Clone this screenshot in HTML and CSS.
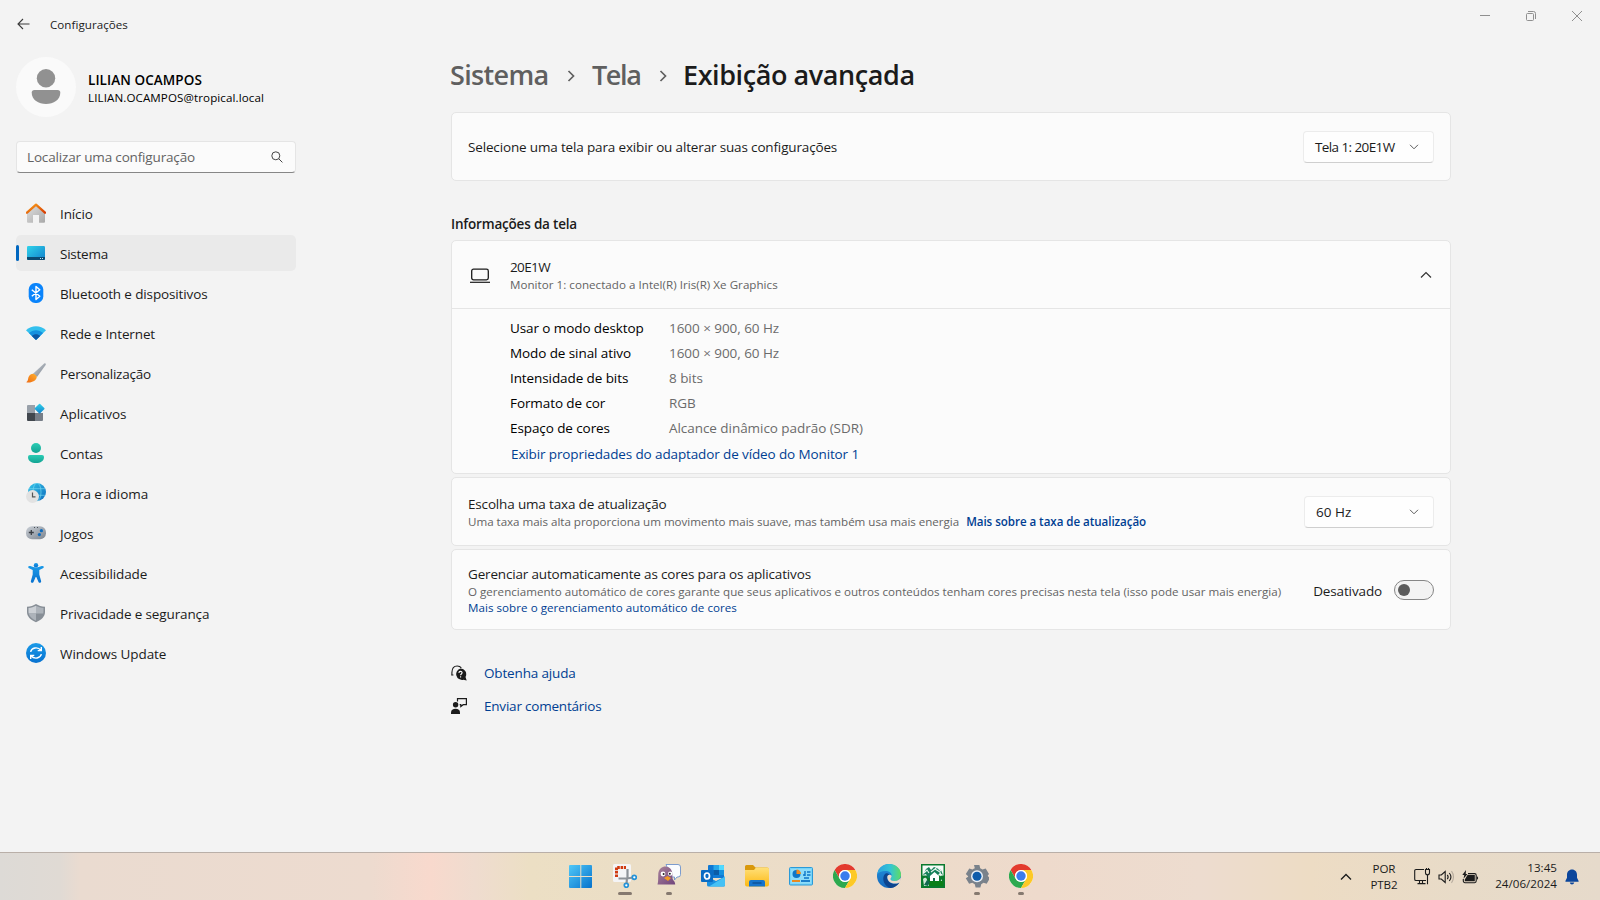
FILE: index.html
```html
<!DOCTYPE html>
<html lang="pt-BR">
<head>
<meta charset="utf-8">
<title>Configurações</title>
<link rel="stylesheet" href="styles.css">
</head>
<body>
<svg class="defs" width="0" height="0" aria-hidden="true">
  <defs>
    <linearGradient id="roof" x1="0" y1="0" x2="1" y2="1"><stop offset="0" stop-color="#f9a01b"/><stop offset="1" stop-color="#d83b01"/></linearGradient>
    <linearGradient id="wall" x1="0" y1="0" x2="1" y2="1"><stop offset="0" stop-color="#e0e0e0"/><stop offset="1" stop-color="#a8a8a8"/></linearGradient>
    <linearGradient id="screen" x1="0" y1="0" x2="1" y2="1"><stop offset="0" stop-color="#2fd3ea"/><stop offset="1" stop-color="#1280cc"/></linearGradient>
    <linearGradient id="teal" x1="0" y1="0" x2="0" y2="1"><stop offset="0" stop-color="#2accb4"/><stop offset="1" stop-color="#13a393"/></linearGradient>
    <linearGradient id="globe" x1="0" y1="0" x2="1" y2="1"><stop offset="0" stop-color="#34c6ea"/><stop offset="1" stop-color="#0f6cbd"/></linearGradient>
    <linearGradient id="steel" x1="0" y1="0" x2="1" y2="1"><stop offset="0" stop-color="#c9cfd6"/><stop offset="1" stop-color="#7c848e"/></linearGradient>
    <linearGradient id="azure" x1="0" y1="0" x2="0" y2="1"><stop offset="0" stop-color="#1a9ae8"/><stop offset="1" stop-color="#0872d0"/></linearGradient>
    <linearGradient id="brush" x1="1" y1="0" x2="0" y2="1"><stop offset="0" stop-color="#ffb02e"/><stop offset="1" stop-color="#ee6a12"/></linearGradient>
    <linearGradient id="win" x1="0" y1="0" x2="1" y2="1"><stop offset="0" stop-color="#50c8f8"/><stop offset="1" stop-color="#0672cc"/></linearGradient>
    <linearGradient id="folder" x1="0" y1="0" x2="0" y2="1"><stop offset="0" stop-color="#ffe07a"/><stop offset="1" stop-color="#fcb913"/></linearGradient>
    <linearGradient id="bird" x1="0" y1="0" x2="1" y2="1"><stop offset="0" stop-color="#a8829a"/><stop offset="1" stop-color="#71457c"/></linearGradient>
    <linearGradient id="edgeTop" x1="0" y1="0" x2="1" y2="0"><stop offset="0" stop-color="#2aa0e0"/><stop offset=".55" stop-color="#34c5d4"/><stop offset="1" stop-color="#5fdc62"/></linearGradient>
    <linearGradient id="edgeLow" x1="0" y1="0" x2="0" y2="1"><stop offset="0" stop-color="#2390dc"/><stop offset="1" stop-color="#1468bc"/></linearGradient>
    <symbol id="chrome" viewBox="0 0 24 24">
      <circle cx="12" cy="12" r="12" fill="#fff"/>
      <path d="M1.6 6A12 12 0 0 1 22.4 6H12a6 6 0 0 0-5.2 9z" fill="#e33b2e"/>
      <path d="M1.6 6A12 12 0 0 0 12 24l5.2-9A6 6 0 0 1 6.8 15z" fill="#2da94f"/>
      <path d="M22.4 6A12 12 0 0 1 12 24l5.2-9A6 6 0 0 0 12 6z" fill="#fdc926"/>
      <circle cx="12" cy="12" r="6" fill="#fff"/><circle cx="12" cy="12" r="4.7" fill="#3b7ded"/>
    </symbol>
  </defs>
</svg>

<div class="window">
  <header class="titlebar">
    <svg class="back" width="14" height="12" viewBox="0 0 14 12"><path d="M12.5 6H1M6 1 1 6l5 5" fill="none" stroke="#3a3a3a" stroke-width="1.1"/></svg>
    <span class="app-name">Configurações</span>
    <div class="controls">
      <svg width="12" height="12" viewBox="0 0 12 12"><path d="M1 5.5h10" stroke="#8f8f8f"/></svg>
      <svg width="12" height="12" viewBox="0 0 12 12" fill="none" stroke="#8f8f8f"><rect x="1.5" y="3.5" width="7" height="7" rx="1"/><path d="M3 1.5h5.5a2 2 0 0 1 2 2V9"/></svg>
      <svg width="12" height="12" viewBox="0 0 12 12"><path d="m1 1 10 10M11 1 1 11" stroke="#8f8f8f"/></svg>
    </div>
  </header>

  <div class="body">
    <aside class="sidebar">
      <div class="profile">
        <svg width="60" height="60" viewBox="0 0 60 60"><circle cx="30" cy="30" r="30" fill="#fafafa"/><circle cx="30" cy="21.3" r="9.2" fill="#919191"/><path d="M18.5 33h23a2.8 2.8 0 0 1 2.8 2.8C44.300 43 37.500 47 30 47s-14.300-4-14.300-11.200A2.800 2.800 0 0 1 18.500 33z" fill="#919191"/></svg>
        <div class="who">
          <strong>LILIAN OCAMPOS</strong>
          <span>LILIAN.OCAMPOS@tropical.local</span>
        </div>
      </div>

      <div class="search">
        <span>Localizar uma configuração</span>
        <svg width="12" height="12" viewBox="0 0 12 12" fill="none" stroke="#454545" stroke-width="1"><circle cx="4.800" cy="4.800" r="4"/><path d="m7.700 7.700 3.700 3.700"/></svg>
      </div>

      <nav class="nav">
        <a class="item">
          <svg viewBox="0 0 20 20"><path d="M1 9.500 10 1.800l9 7.700v9.300a1 1 0 0 1-1 1h-5V12H7v7.800H2a1 1 0 0 1-1-1z" fill="url(#wall)"/><path d="m1 9.700 9-8 9 8" fill="none" stroke="url(#roof)" stroke-width="2.300" stroke-linecap="round" stroke-linejoin="round"/></svg>
          <span>Início</span>
        </a>
        <a class="item active">
          <svg viewBox="0 0 20 20"><rect x="1" y="3" width="18" height="14" rx="1.200" fill="url(#screen)"/><path d="M1 14h18v1.800a1.200 1.200 0 0 1-1.200 1.200H2.200A1.200 1.200 0 0 1 1 15.800z" fill="#0b4a72"/><path d="M14 15.500h1M16 15.500h1" stroke="#bfe8f7"/></svg>
          <span class="t2">Sistema</span>
        </a>
        <a class="item">
          <svg viewBox="0 0 20 20"><rect x="2.700" y="0" width="14.600" height="20" rx="6.500" fill="#0a84fb"/><path d="m5.800 6.700 8 6.600-3.800 3.200V3.500l3.800 3.200-8 6.600" fill="none" stroke="#fff" stroke-width="1.400" stroke-linejoin="round"/></svg>
          <span>Bluetooth e dispositivos</span>
        </a>
        <a class="item">
          <svg viewBox="0 0 20 20"><path d="M0 7.200C5.500 1.800 14.500 1.800 20 7.200L10 17z" fill="#33c0ee"/><path d="M2.900 10.100c4-3.900 10.200-3.900 14.200 0L10 17z" fill="#1490df"/><path d="M5.800 13c2.400-2.200 6-2.200 8.400 0L10 17z" fill="#0c57a4"/></svg>
          <span>Rede e Internet</span>
        </a>
        <a class="item">
          <svg viewBox="0 0 20 20"><path d="M18.200.5c1.300-.5 2 .3 1.400 1.500L11 14l-4-3.200z" fill="url(#steel)"/><path d="M7.300 10.800c1.800.6 2.900 1.600 3.500 3.200-.6 3.800-5 6.200-10.600 5.300 2-1 1.600-2.700 2.200-4.700.6-2.200 2.600-3.700 4.900-3.800z" fill="url(#brush)"/></svg>
          <span class="t2">Personalização</span>
        </a>
        <a class="item">
          <svg viewBox="0 0 20 20"><path d="M1 3a1 1 0 0 1 1-1h7v8H1z" fill="#98a0a9"/><path d="M1 10h8v8H2a1 1 0 0 1-1-1z" fill="#41474e"/><path d="M9 10h8v7a1 1 0 0 1-1 1H9z" fill="#777e88"/><rect x="9.900" y="1.900" width="7.400" height="7.400" rx=".8" transform="rotate(45 13.600 5.600)" fill="url(#screen)"/></svg>
          <span class="t0">Aplicativos</span>
        </a>
        <a class="item">
          <svg viewBox="0 0 20 20" fill="url(#teal)"><circle cx="10" cy="5" r="5"/><path d="M4 12h12a2 2 0 0 1 2 2c0 4-3.600 6-8 6s-8-2-8-6a2 2 0 0 1 2-2z"/></svg>
          <span>Contas</span>
        </a>
        <a class="item">
          <svg viewBox="0 0 20 20"><circle cx="11" cy="9" r="9" fill="url(#globe)"/><g fill="none" stroke="#7fe0f4" stroke-width=".6"><ellipse cx="11" cy="9" rx="4" ry="9"/><path d="M3 5.700h16M3 12.300h16"/></g><circle cx="6.500" cy="13.500" r="6.500" fill="#e2e2e2"/><path d="M6.500 9.500v4.300h3" fill="none" stroke="#555" stroke-width="1.200"/></svg>
          <span class="t0">Hora e idioma</span>
        </a>
        <a class="item">
          <svg viewBox="0 0 20 20"><rect x="0" y="3.300" width="20" height="13" rx="6" fill="url(#steel)"/><path d="M2.800 9.500h5M5.300 7v5" stroke="#3a3f45" stroke-width="1.300"/><path d="M8 4.500h1M11 4.500h1" stroke="#4a4f55"/><circle cx="15.400" cy="7.700" r="1.600" fill="#0f6cbd"/><circle cx="13.400" cy="11.600" r="1.600" fill="#0f6cbd"/></svg>
          <span class="t0">Jogos</span>
        </a>
        <a class="item">
          <svg viewBox="0 0 20 20" fill="url(#azure)"><circle cx="10" cy="2.200" r="2.200"/><path d="M2.300 3.600c.5-.9 1.300-.8 2-.5C8.500 5 11.500 5 15.700 3.100c.7-.3 1.600-.4 2 .5.300.8-.1 1.400-.8 1.700L13.300 7v4.500l1.800 6.600c.2.800-.1 1.500-.9 1.700-.8.200-1.400-.2-1.700-.9L10.300 14h-.6l-2.200 4.900c-.3.700-.9 1.100-1.700.9-.8-.2-1.100-.9-.9-1.700l1.800-6.600V7L3.100 5.300c-.7-.3-1.100-.9-.8-1.700z"/></svg>
          <span>Acessibilidade</span>
        </a>
        <a class="item">
          <svg viewBox="0 0 20 20"><path d="M10 1c2.500 1.700 5.500 2.600 9 2.700V9c0 4.500-3.500 8-9 10.200C4.500 17 1 13.500 1 9V3.700C4.500 3.600 7.500 2.700 10 1z" fill="#878e96"/><path d="M10 2.800v7.700H2.700C2.400 8.500 2.500 7 2.500 5 5.300 4.800 7.800 4.100 10 2.800z" fill="#ccd0d5"/><path d="M10 2.800v7.700h7.300c.3-2 .2-3.500.2-5.500-2.800-.2-5.300-.9-7.500-2.200zM10 10.500H2.700c.9 3.200 3.300 5.300 7.300 7.200z" fill="#adb3ba"/></svg>
          <span>Privacidade e segurança</span>
        </a>
        <a class="item">
          <svg viewBox="0 0 20 20"><circle cx="10" cy="10" r="10" fill="url(#azure)"/><path d="M4.600 8.800c1-4 7-5.600 10.300-1.600M15.300 4v3.600h-3.600M15.400 11.200c-1 4-7 5.600-10.300 1.600M4.700 16v-3.600h3.600" fill="none" stroke="#fff" stroke-width="1.400"/></svg>
          <span class="t0">Windows Update</span>
        </a>
      </nav>
    </aside>

    <main class="main">
      <h1 class="crumbs">
        <span class="c1">Sistema</span>
        <svg width="8" height="12" viewBox="0 0 8 12"><path d="m1.500 1 5 5-5 5" fill="none" stroke="#5f5f5f" stroke-width="1.700"/></svg>
        <span class="c2">Tela</span>
        <svg width="8" height="12" viewBox="0 0 8 12"><path d="m1.500 1 5 5-5 5" fill="none" stroke="#5f5f5f" stroke-width="1.700"/></svg>
        <span class="current">Exibição avançada</span>
      </h1>

      <section class="card row select-display">
        <span class="label">Selecione uma tela para exibir ou alterar suas configurações</span>
        <div class="combo display"><span>Tela 1: 20E1W</span><svg width="10" height="6" viewBox="0 0 10 6"><path d="m1 .8 4 4 4-4" fill="none" stroke="#5c5c5c"/></svg></div>
      </section>

      <h2>Informações da tela</h2>

      <section class="card info">
        <div class="info-head">
          <svg class="laptop" width="20" height="16" viewBox="0 0 20 16" fill="none" stroke="#1b1b1b"><rect x="1.700" y="1.200" width="16.600" height="10.600" rx="1.800" stroke-width="1.300"/><path d="M0 14.300h20" stroke-width="1.200"/></svg>
          <div class="names"><span class="model">20E1W</span><span class="sub">Monitor 1: conectado a Intel(R) Iris(R) Xe Graphics</span></div>
          <svg class="fold" width="12" height="8" viewBox="0 0 12 8"><path d="m1 6.500 5-5 5 5" fill="none" stroke="#333" stroke-width="1.200"/></svg>
        </div>
        <div class="details">
          <dl>
            <dt>Usar o modo desktop</dt><dd>1600 × 900, 60 Hz</dd>
            <dt>Modo de sinal ativo</dt><dd>1600 × 900, 60 Hz</dd>
            <dt>Intensidade de bits</dt><dd>8 bits</dd>
            <dt>Formato de cor</dt><dd>RGB</dd>
            <dt>Espaço de cores</dt><dd>Alcance dinâmico padrão (SDR)</dd>
          </dl>
          <a class="link adapter">Exibir propriedades do adaptador de vídeo do Monitor 1</a>
        </div>
      </section>

      <section class="card row refresh">
        <div class="stack">
          <span class="label">Escolha uma taxa de atualização</span>
          <span class="sub"><span class="desc">Uma taxa mais alta proporciona um movimento mais suave, mas também usa mais energia</span><a class="link bold">Mais sobre a taxa de atualização</a></span>
        </div>
        <div class="combo rate"><span>60 Hz</span><svg width="10" height="6" viewBox="0 0 10 6"><path d="m1 .8 4 4 4-4" fill="none" stroke="#5c5c5c"/></svg></div>
      </section>

      <section class="card row colors">
        <div class="stack">
          <span class="label">Gerenciar automaticamente as cores para os aplicativos</span>
          <span class="sub wide">O gerenciamento automático de cores garante que seus aplicativos e outros conteúdos tenham cores precisas nesta tela (isso pode usar mais energia)</span>
          <a class="link medium">Mais sobre o gerenciamento automático de cores</a>
        </div>
        <span class="state">Desativado</span>
        <div class="toggle"><i></i></div>
      </section>

      <div class="help">
        <a><svg width="16" height="16" viewBox="0 0 16 16"><path d="M.9 10V7.500C1 3.500 3 1 6.200 1c1.900 0 3.200.7 4.100 1.900M.2 10h2.200" fill="none" stroke="#1b1b1b" stroke-width="1.100"/><path d="M9.500 3.500a5.700 5.700 0 0 1 5 8.500l1.200 3.600-3.300-.9A5.700 5.700 0 1 1 9.500 3.500z" fill="#1b1b1b"/><path d="M7.900 8c0-2.200 3.200-2.100 3.200-.2 0 1.200-1.500 1.200-1.500 2.400M9.600 11.200v1.200" fill="none" stroke="#fff" stroke-width="1.100"/></svg><span>Obtenha ajuda</span></a>
        <a><svg width="16" height="16" viewBox="0 0 16 16"><circle cx="4.600" cy="6.800" r="2.700" fill="#1b1b1b"/><path d="M0 16v-1.600C0 12 2 10.700 4.600 10.700S9 12 9 14.400V16z" fill="#1b1b1b"/><path d="M6.500 3.500V.6h8.900v6.100h-3.200L9.800 8.500V6.700H8.700" fill="none" stroke="#1b1b1b" stroke-width="1.200"/></svg><span class="send">Enviar comentários</span></a>
      </div>
    </main>
  </div>
</div>

<footer class="taskbar">
  <div class="apps">
    <div class="app"><svg viewBox="0 0 24 24" fill="url(#win)"><path d="M1 1H11.300V12H0V2a1 1 0 0 1 1-1zM12.300 1H22a1 1 0 0 1 1 1V12H12.300zM0 13H11.300V24H1a1 1 0 0 1-1-1zM12.300 13H23V23a1 1 0 0 1-1 1H12.300z"/></svg></div>
    <div class="app focused"><svg viewBox="0 0 24 24"><rect x="0" y="0" width="18" height="18" rx="1.500" fill="#f4f4f6"/><path d="M3.500 13V3.500H13" fill="none" stroke="#d03a10" stroke-width="3" stroke-dasharray="2.600 .8"/><path d="M14.500 5v8.500M5.500 14.500H14L20 13.500M14 14l-.5 6" fill="none" stroke="#8d9298" stroke-width="2.200"/><circle cx="21.300" cy="13.300" r="2" fill="#fff" stroke="#2492d8" stroke-width="1.700"/><circle cx="13.300" cy="21.300" r="2" fill="#fff" stroke="#2492d8" stroke-width="1.700"/></svg></div>
    <div class="app open"><svg viewBox="0 0 24 24"><path d="M9 .5h12a2.500 2.500 0 0 1 2.500 2.500v7.500a2.500 2.500 0 0 1-2.500 2.500h-1l-2.500 3V13H14z" fill="#fafcff" stroke="#6e93cc" stroke-width=".9"/><path d="M.5 20.500C1.500 17 1 14 1.300 9.500 1.800 5 5 2.500 8.500 2.500c4 0 6.500 3 6.800 7 .2 3.500-.3 5.500 1.700 7.500.8 1 1.200 2.500 1.200 3.500z" fill="url(#bird)"/><circle cx="6" cy="10" r="2.400" fill="#fff"/><circle cx="13.200" cy="9.600" r="2.200" fill="#fff"/><circle cx="6.600" cy="10" r="1" fill="#222"/><circle cx="12.800" cy="9.700" r="1" fill="#222"/><path d="m7 14 3.500-2 3.500 2-3 3z" fill="#f29a22"/></svg></div>
    <div class="app"><svg viewBox="0 0 24 24"><path d="M7 2a1 1 0 0 1 1-1h14a1 1 0 0 1 1 1v12H7z" fill="#0f78d4"/><path d="M12.500 1H18v5h-5.500z" fill="#28a8ea"/><path d="M18 1h4a1 1 0 0 1 1 1v4h-5z" fill="#50d9ff"/><path d="M12.500 6H18v5h-5.500z" fill="#0a5ca8"/><path d="M18 6h5v5h-5z" fill="#1490df"/><path d="M6 12.500 15 17l9-4.500V21a1.500 1.500 0 0 1-1.500 1.500h-15A1.500 1.500 0 0 1 6 21z" fill="#1a8fe0"/><path d="M24 12.500V21a1.500 1.500 0 0 1-1.500 1.500H8z" fill="#45c1f5"/><rect x="0" y="6" width="12" height="12" rx="1" fill="#0a6cc4"/><ellipse cx="6" cy="12" rx="2.500" ry="3" fill="none" stroke="#fff" stroke-width="1.700"/></svg></div>
    <div class="app"><svg viewBox="0 0 24 24"><path d="M0 2.500A1.500 1.500 0 0 1 1.500 1H8l2.500 2.500H22a2 2 0 0 1 2 2V14H0z" fill="#d9980b"/><path d="M0 6h9l2-2.500h11.500A1.500 1.500 0 0 1 24 5v15.500a2 2 0 0 1-2 2H2a2 2 0 0 1-2-2z" fill="url(#folder)"/><path d="M4 22.500V18a2 2 0 0 1 2-2h12a2 2 0 0 1 2 2v4.500z" fill="#1574cc"/><path d="M7.500 19h9" stroke="#0b4f96" stroke-width="1.400"/></svg></div>
    <div class="app"><svg viewBox="0 0 24 24"><rect x=".5" y="3.500" width="23" height="17.500" rx="1" fill="#76d4f8" stroke="#2b9ad8"/><path d="M2 5h20v14.500H2z" fill="#8edcf9"/><circle cx="7.500" cy="10" r="4" fill="#0f76c8"/><path d="M7.500 10V5.500a4.500 4.500 0 0 1 4.500 4.500z" fill="#f28c1e"/><path d="M14 11h2M18 8h3.500M18 11h3.500M15 14h5M16 7v5" stroke="#0f76c8" stroke-width="1.400"/><path d="M3 17h8" stroke="#e88a20" stroke-width="2"/><path d="M12 17h9" stroke="#1b7fcb" stroke-width="2"/></svg></div>
    <div class="app"><svg><use href="#chrome"/></svg></div>
    <div class="app"><svg viewBox="0 0 24 24"><circle cx="12" cy="12" r="12" fill="url(#edgeLow)"/><path d="M.2 10.500C1 4.500 5.800 0 12 0c7 0 12 5 12 10.500 0 4-2.800 6.500-6.300 6.500-2.800 0-4.200-1-4.200-2 0-.8 1.200-1.200 1.200-3.200C14.700 9 12 7 8.500 7 4.500 7 1.500 8.500.2 10.500z" fill="url(#edgeTop)"/><path d="M8.600 9.500c-4 3-3 11.500 4.400 14.400 4 .3 7.500-2 9.300-5.300-5 3-12 .5-12-5.100 0-1.500.8-2.500 2-3-1.200-1.300-2.500-1.600-3.700-1z" fill="#0c448e"/><path d="M10.300 13c-.2 5 6 8.500 12.200 5.400l1.300-1.900V13.500c-1.200 2.300-3.500 3.500-6.100 3.500-2.800 0-4.200-1-4.200-2 0-.8 1.200-1.200 1.200-3.200-1.600-2-4.200-1.300-4.400 1.200z" fill="#eddccb"/></svg></div>
    <div class="app"><svg viewBox="0 0 24 24"><path d="M0 0h24v24H0z" fill="#0a7a2e"/><path d="M1.500 1.500h21v10h-21z" fill="#f7fbf8"/><path d="m2 11 3-6 3-2 2 3 3-3 3 1 4 2 2 5-3-2-2 2v3h-3v-3h-4v3H7l-2-4z" fill="#16805a"/><path d="m3 9 3-3 2 3M10 8l4-3 5 3 1 4M14 5l2-2 4 4" fill="none" stroke="#e8f5ee" stroke-width="1.100"/><path d="m9 12 4.500-4 4.500 4v5H9z" fill="#fff"/><path d="M2 15c3-3 5 0 4 5l5-3 2 3 6-2 2-3v5l-8 2H3z" fill="#cfe9d8"/><path d="M8 17h14v5H8z" fill="#0a7f18"/><path d="m3 21 3-5 3 2-2 4zM12 17v-3h2v3z" fill="#12694f"/></svg></div>
    <div class="app open"><svg viewBox="0 0 24 24"><path d="m9 1 .8 3.200a8 8 0 0 0-2.300 1.300L4.300 4.600.8 10.100l2.300 2.100v.6L.8 14.200l3.300 5.500 3.200-.9 2.500 1.500.8 3.100h4.800l.8-3.100 2.300-1.500 3.200.9 3.300-5.500-2.200-2.100v-.6L24 10.100 20.700 4.600l-3.200.9-2.300-1.300L14.400 1z" fill="#7a828b"/><circle cx="12" cy="12.200" r="6" fill="#e8eef5"/><circle cx="12" cy="12.200" r="4.500" fill="#0e5cab"/></svg></div>
    <div class="app open"><svg><use href="#chrome"/></svg></div>
  </div>

  <div class="tray">
    <svg class="more" width="12" height="8" viewBox="0 0 12 8"><path d="m1 6.500 5-5 5 5" fill="none" stroke="#1b1b1b" stroke-width="1.300"/></svg>
    <div class="lang"><span>POR</span><span>PTB2</span></div>
    <svg class="net" width="17" height="17" viewBox="0 0 17 17" fill="none" stroke="#1b1b1b" stroke-width="1.100"><path d="M10 1.500H2A1.300 1.300 0 0 0 .7 2.800v8.400A1.300 1.300 0 0 0 2 12.500h10M5.500 12.500v3M8.500 12.500v3M3.500 15.600h8"/><path d="M11.500 1.500h4v3.200a2 2 0 0 1-4 0zM13.500 6.500v9.800M12.500 0v1.500M14.500 0v1.500"/></svg>
    <svg class="vol" width="17" height="14" viewBox="0 0 17 14" fill="none" stroke="#1b1b1b" stroke-width="1.100"><path d="M1 5v4h2.300L7.200 12.500v-11L3.300 5zM9.300 4.800c1 1.300 1 3.100 0 4.400M11.300 3c1.900 2.300 1.900 5.700 0 8"/><path d="M13.500 1.200c2.600 3.300 2.600 8.300 0 11.600" stroke="#b5aa9c"/></svg>
    <svg class="bat" width="17" height="14" viewBox="0 0 17 14"><path d="M6 3.600h6.600A1.600 1.600 0 0 1 14.200 5.200v5.900a1.600 1.600 0 0 1-1.600 1.600H2.900a1.600 1.600 0 0 1-1.600-1.600V9" fill="none" stroke="#1b1b1b" stroke-width="1.100"/><path d="M5.500 5h7.300v6.300H2.800V9.500zM15 6.300c1.500.3 1.500 3.200 0 3.500zM4 0 .3 5h2L1.500 8.800 5.500 4H3.700z" fill="#1b1b1b"/></svg>
    <div class="clock"><span>13:45</span><span>24/06/2024</span></div>
    <svg class="bell" width="14" height="16" viewBox="0 0 14 16" fill="#0b459b"><path d="M7 .5c3 0 5 2.300 5 5.200v3.100l1.600 3.200c.2.400 0 .8-.4.800H.8c-.4 0-.6-.4-.4-.8L2 8.800V5.700C2 2.800 4 .500 7 .500zM4.800 13.500h4.400C9 14.700 8 15.500 7 15.500s-2-.8-2.200-2z"/></svg>
  </div>
</footer>
</body>
</html>
```
FILE: styles.css
```css
* { box-sizing: border-box; }

body {
  margin: 0;
  width: 1600px;
  height: 900px;
  overflow: hidden;
  background: #f3f3f3;
  color: #1b1b1b;
  font-family: "Open Sans", "Noto Sans", sans-serif;
  font-size: 13.5px;
  letter-spacing: -0.13px;
  line-height: 20px;
  white-space: nowrap;
}

svg { display: block; flex: none; }
.defs { position: absolute; }

.window { height: 852px; }

/* Title bar */
.titlebar {
  display: flex;
  height: 48px;
  padding-left: 17px;
}
.back { margin-top: 18px; }
.app-name {
  margin: 15px 0 0 19px;
  font-size: 11.6px;
  letter-spacing: 0.04px;
}
.controls {
  display: flex;
  gap: 34px;
  margin: 10px 17px 0 auto;
}

.body { display: flex; }

/* Sidebar */
.sidebar {
  width: 451px;
  padding: 9px 155px 0 16px;
}
.profile { display: flex; gap: 12px; height: 60px; }
.who { display: flex; flex-direction: column; padding-top: 14px; color: #000; }
.who strong { font-weight: 600; line-height: 18px; letter-spacing: 0.08px; }
.who span { font-size: 11.6px; line-height: 17px; letter-spacing: 0.1px; }

.search {
  display: flex;
  align-items: center;
  justify-content: space-between;
  width: 280px;
  height: 32px;
  margin-top: 24px;
  padding: 0 12px 0 10px;
  border: 1px solid #e5e5e5;
  border-bottom-color: #868686;
  border-radius: 4px;
  background: #fbfbfb;
  color: #636363;
  letter-spacing: -0.16px;
}

.nav {
  display: flex;
  flex-direction: column;
  gap: 4px;
  width: 280px;
  margin-top: 22px;
}
.item {
  position: relative;
  display: flex;
  align-items: center;
  gap: 14px;
  height: 36px;
  padding-left: 10px;
  border-radius: 5px;
}
.item svg { width: 20px; height: 20px; }
.item span { padding-top: 2px; }
.item .t0 { letter-spacing: -0.06px; }
.item .t2 { letter-spacing: -0.25px; }
.active { background: #eaeaea; }
.active::before {
  content: "";
  position: absolute;
  left: 0;
  top: 10px;
  width: 3px;
  height: 16px;
  border-radius: 2px;
  background: #0067c0;
}

/* Main column */
.main { width: 1000px; }

.crumbs {
  display: flex;
  align-items: center;
  margin: 9px 0 19px -1px;
  height: 36px;
  font-size: 27px;
  font-weight: 600;
  line-height: 36px;
  color: #5f5f5f;
}
.crumbs svg { margin-top: 1px; }
.c1 { width: 117px; letter-spacing: -0.65px; }
.c2 { width: 67px; margin-left: 17px; letter-spacing: -1.4px; }
.current { margin-left: 16px; color: #1b1b1b; letter-spacing: -0.42px; }

.card {
  border: 1px solid #e5e5e5;
  border-radius: 5px;
  background: #fbfbfb;
}
.row { display: flex; align-items: center; padding: 0 16px; }
.select-display { height: 69px; }
.select-display .label { padding-top: 1px; letter-spacing: -0.155px; }

.combo {
  display: flex;
  align-items: center;
  justify-content: space-between;
  width: 131px;
  height: 32px;
  margin-left: auto;
  padding: 0 14px 0 11px;
  border: 1px solid #ececec;
  border-bottom-color: #cfcfcf;
  border-radius: 4px;
  background: #fefefe;
}
.display span { letter-spacing: -0.6px; }
.rate { width: 130px; }
.rate span { letter-spacing: 0; }

h2 {
  margin: 33px 0 6px;
  font-size: 13.5px;
  font-weight: 600;
  line-height: 20px;
  letter-spacing: -0.19px;
}

.info { height: 234px; }
.info-head {
  display: flex;
  align-items: center;
  height: 67px;
  padding: 0 18px;
}
.laptop { margin-top: 2px; }
.names { display: flex; flex-direction: column; padding: 1px 0 0 20px; }
.model { line-height: 19px; letter-spacing: -0.62px; }
.fold { margin-left: auto; }
.sub {
  font-size: 11.6px;
  line-height: 16px;
  letter-spacing: 0.03px;
  color: #636363;
}
.details { padding: 7px 0 0 58px; border-top: 1px solid #e5e5e5; }
dl {
  display: grid;
  grid-template-columns: 159px 1fr;
  margin: 0;
  line-height: 25px;
  color: #000;
}
dt { letter-spacing: -0.09px; }
dd { margin: 0; color: #6b6b6b; letter-spacing: -0.05px; }
.link { color: #003e92; }
.adapter { display: block; padding: 3px 0 0 1px; letter-spacing: -0.12px; }

.stack { display: flex; flex-direction: column; }
.stack .label { line-height: 19px; letter-spacing: -0.165px; }
.refresh { height: 69px; margin-top: 3px; }
.refresh .stack { padding-top: 2px; }
.refresh .sub { display: flex; gap: 7px; letter-spacing: -0.027px; }
.bold { font-weight: 600; letter-spacing: -0.054px; }
.colors { height: 81px; margin-top: 3px; }
.colors .stack { padding-top: 2px; }
.colors .sub { line-height: 16px; letter-spacing: 0.01px; }
.medium { font-size: 11.6px; font-weight: 500; line-height: 16px; letter-spacing: 0.04px; }
.state { margin-left: auto; padding-top: 2px; }
.toggle {
  width: 40px;
  height: 20px;
  margin-left: 12px;
  padding: 3px;
  border: 1px solid #868686;
  border-radius: 10px;
  background: #f3f3f3;
}
.toggle i { display: block; width: 12px; height: 12px; border-radius: 50%; background: #5c5c5c; }

.help {
  display: flex;
  flex-direction: column;
  gap: 13px;
  margin-top: 33px;
  color: #003e92;
}
.help a { display: flex; align-items: center; gap: 17px; height: 20px; }
.help span { letter-spacing: -0.16px; }
.help .send { letter-spacing: -0.21px; }

/* Taskbar */
.taskbar {
  display: flex;
  height: 48px;
  border-top: 1px solid #b9afa8;
  background: linear-gradient(90deg, #dddad6 0, #e0dad4 60px, #eadbd0 80px, #eddbcf 370px, #f8d9cd 430px, #efdccf 475px, #ecdfc4 530px, #ebdec6 620px, #ecdcc9 850px, #eedacc 1040px, #eddccf 1200px, #eddcc4 1310px, #e8dbc8 1460px, #e6dacb 1600px);
}
.apps { display: flex; gap: 20px; padding: 11px 0 0 569px; }
.app { width: 24px; }
.app svg { width: 24px; height: 24px; }
.open::after, .focused::after {
  content: "";
  display: block;
  width: 6px;
  height: 3px;
  margin: 4px auto 0;
  border-radius: 2px;
  background: #85796f;
}
.focused::after { width: 14px; }

.tray {
  display: flex;
  align-items: center;
  margin-left: auto;
  padding-right: 21px;
  font-size: 11.6px;
  line-height: 16px;
  letter-spacing: 0.03px;
}
.lang, .clock { display: flex; flex-direction: column; }
.lang { align-items: center; width: 30px; margin-left: 17px; letter-spacing: -0.1px; }
.clock { align-items: flex-end; width: 66px; margin: 0 0 2px 12px; }
.net { margin-left: 15px; }
.vol { margin-left: 7px; }
.bat { margin-left: 7px; }
.bell { margin-left: 8px; }
```
